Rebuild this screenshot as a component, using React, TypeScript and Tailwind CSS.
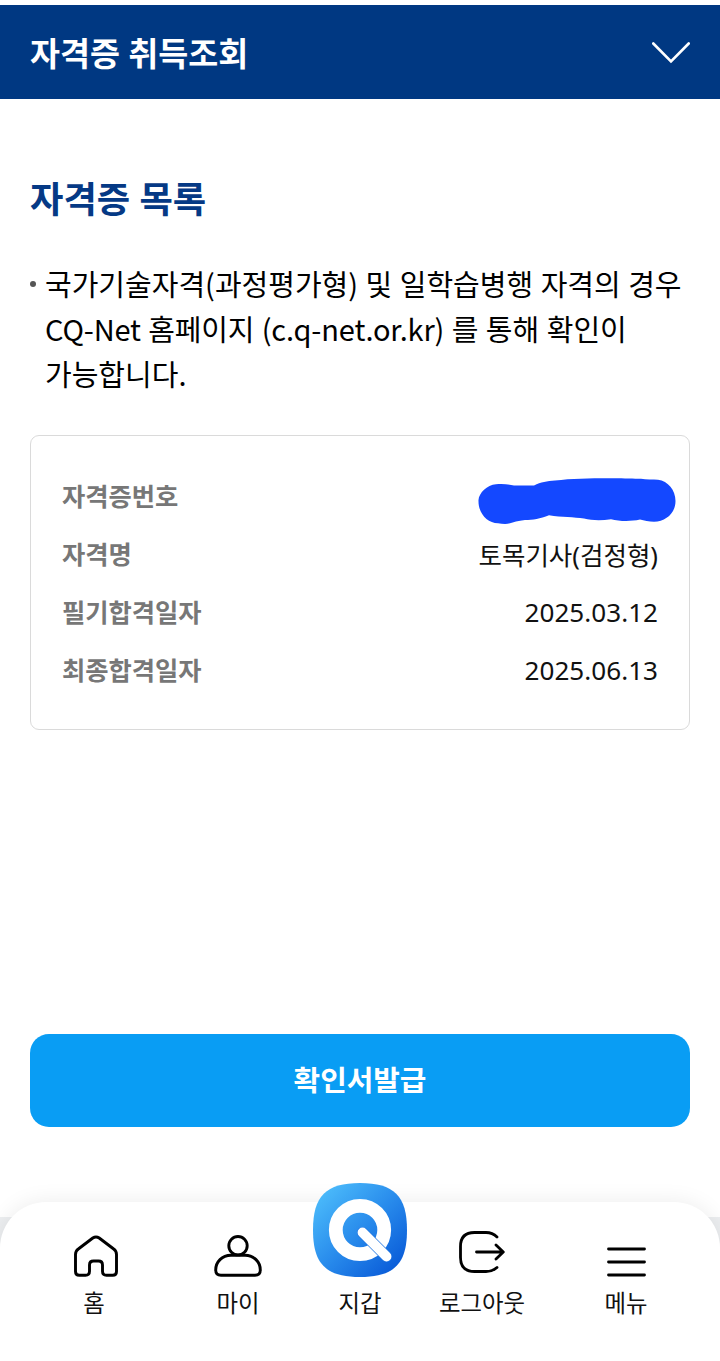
import type { ReactNode } from "react";

interface InfoRow {
  label: string;
  value: ReactNode;
}

interface NavItem {
  label: string;
  icon: ReactNode;
}

// Brush stroke that hides the certificate number
const HiddenNumber = () => (
  <svg width="198" height="47" viewBox="0 0 198 47" className="-mr-[18px] mt-[9px]" aria-hidden="true">
    <path
      d="M0.5 22C1 15 9 7 18 6.300C25 5.500 31 6.500 36 7.600L56 7.500C63 4 69 3 77 2.500C93 0.500 112 0.300 130 0.200C143 0 155 0.600 163 0.800C168 1.600 175 1.500 180 1.700C190 3 197.500 12 197.500 23C197.500 35 188 43.500 176 43.700C171 43.700 166 42.500 162 41.500C153 43.500 142 43.500 133 41.200C123 42.800 114 42.500 106 40.500C96 39 84 39.500 71 37.300C62 41 55 42 47 42C40 43 35 44 32 45.300C28 46.500 24 45.800 20 45.300C9 45 0 35 0.500 22Z"
      fill="#1448ff"
    />
  </svg>
);

const INFO_ROWS: InfoRow[] = [
  { label: "자격증번호", value: <HiddenNumber /> },
  { label: "자격명", value: "토목기사(검정형)" },
  { label: "필기합격일자", value: <span className="text-[26.100px]">2025.03.12</span> },
  { label: "최종합격일자", value: <span className="text-[26.100px]">2025.06.13</span> },
];

const HomeIcon = () => (
  <svg width="44" height="42" viewBox="0 0 44 42" fill="none" stroke="#000" strokeWidth="2.900" strokeLinejoin="round" className="ml-[3px]">
    <path d="M1.500 19.500Q1.500 16 4.300 14L18.800 3Q22 0.800 25.200 3L39.700 14Q42.500 16 42.500 19.500V36.500Q42.500 40.300 38.700 40.300H32.500Q28.500 40.300 28.500 36.300V30Q28.500 26 24.500 26H19.500Q15.500 26 15.500 30V36.300Q15.500 40.300 11.500 40.300H5.300Q1.500 40.300 1.500 36.500Z" />
  </svg>
);

const UserIcon = () => (
  <svg width="48" height="42" viewBox="0 0 48 42" fill="none" stroke="#000" strokeWidth="2.900">
    <circle cx="24" cy="10.700" r="9.200" />
    <path d="M17 20.300H31C40 20.300 46.300 27 46.300 35Q46.300 40.300 41 40.300H7Q1.700 40.300 1.700 35C1.700 27 8 20.300 17 20.300Z" />
  </svg>
);

const WalletIcon = () => (
  <svg width="94" height="94" viewBox="0 0 94 94" className="shrink-0">
    <defs>
      <linearGradient id="wallet" x1="0.080" y1="0.080" x2="0.900" y2="0.920">
        <stop offset="0" stopColor="#4cbcfb" />
        <stop offset="0.500" stopColor="#298cec" />
        <stop offset="1" stopColor="#095bd8" />
      </linearGradient>
    </defs>
    <path d="M47 0C81 0 94 13 94 47S81 94 47 94S0 81 0 47S13 0 47 0Z" fill="url(#wallet)" />
    <circle cx="47" cy="47" r="24.200" fill="none" stroke="#fff" strokeWidth="13.800" />
    <path d="M49.500 49.500L73.500 73.500" stroke="#2277e2" strokeWidth="11" strokeLinecap="round" />
    <path d="M49.500 49.500L73.500 73.500" stroke="#fff" strokeWidth="9.800" strokeLinecap="round" />
  </svg>
);

const LogoutIcon = () => (
  <svg width="46" height="42" viewBox="0 0 46 42" fill="none" stroke="#000" strokeWidth="2.800" strokeLinecap="round" strokeLinejoin="round">
    <path d="M38 6Q33.500 1.500 27 1.500H15.500Q1.500 1.500 1.500 15.500V26.500Q1.500 40.500 15.500 40.500H27Q33.500 40.500 38 36.500" />
    <path d="M17.500 21H44M37 14L44.300 21L37 28" />
  </svg>
);

const MenuIcon = () => (
  <svg width="39" height="30" viewBox="0 0 39 30" stroke="#000" strokeWidth="2.800" strokeLinecap="round">
    <path d="M1.500 2H37.500M1.500 15H37.500M1.500 28H37.500" />
  </svg>
);

const NAV_ITEMS: NavItem[] = [
  { label: "홈", icon: <HomeIcon /> },
  { label: "마이", icon: <UserIcon /> },
  { label: "지갑", icon: <WalletIcon /> },
  { label: "로그아웃", icon: <div className="mb-1"><LogoutIcon /></div> },
  { label: "메뉴", icon: <MenuIcon /> },
];

export default function App() {
  return (
    <div className="flex h-[1361px] w-[720px] flex-col overflow-hidden bg-white font-['Noto_Sans_CJK_KR',sans-serif] text-black">
      {/* Header */}
      <header className="mt-[5px] flex h-[94px] shrink-0 items-center justify-between bg-[#003882] px-[30px]">
        <h1 className="text-[32.600px] leading-[48px] font-bold text-white [word-spacing:1px]">자격증 취득조회</h1>
        <svg width="38" height="22" viewBox="0 0 38 22" fill="none" stroke="#fff" strokeWidth="2.600" strokeLinecap="round" className="mt-px">
          <path d="M1.300 1.500L19 19.500L36.700 1.500" />
        </svg>
      </header>

      <main className="flex flex-1 flex-col px-[30px] pt-[70px]">
        <h2 className="text-[36.300px] leading-[56px] font-bold text-[#053985] [word-spacing:1px]">자격증 목록</h2>

        <div className="mt-[36px] flex">
          <span className="mt-[20px] size-[6px] shrink-0 rounded-full bg-[#555]" />
          <p className="ml-[9px] text-[29px] leading-[45px] whitespace-nowrap [word-spacing:1px]">
            국가기술자격(과정평가형) 및 일학습병행 자격의 경우
            <br />
            <span className="tracking-[-0.15px]">CQ-Net 홈페이지 (c.q-net.or.kr)</span> 를 통해 확인이
            <br />
            가능합니다.
          </p>
        </div>

        {/* Certificate card */}
        <dl className="mt-[39px] h-[295px] rounded-[9px] border-[1.500px] border-[#dadada] px-[31px] pt-[32px]">
          {INFO_ROWS.map((row) => (
            <div key={row.label} className="flex h-[58px] items-center justify-between">
              <dt className="-mt-[2px] text-[25.300px] font-bold text-[#777]">{row.label}</dt>
              <dd className="font-['Noto_Sans','Noto_Sans_CJK_KR',sans-serif] text-[25.500px] text-[#111]">{row.value}</dd>
            </div>
          ))}
        </dl>

        <button className="mt-[304px] h-[93px] rounded-[19px] bg-[#099df4] pb-[3px] text-[28.900px] font-bold text-white">
          확인서발급
        </button>
      </main>

      {/* Bottom navigation */}
      <div className="mt-auto h-[144px] shrink-0 bg-[#eceef0]">
        <nav className="relative -mt-[15px] grid h-[159px] grid-cols-[144px_144px_100px_144px_144px] rounded-t-[46px] bg-white px-[22px] shadow-[0_0_22px_rgba(0,0,0,0.080)]">
          {NAV_ITEMS.map((item) => (
            <button key={item.label} className="flex h-[118px] flex-col items-center justify-end">
              {item.icon}
              <span className="mt-[7px] text-[23.400px] leading-9 whitespace-nowrap text-[#111]">{item.label}</span>
            </button>
          ))}
        </nav>
      </div>
    </div>
  );
}
